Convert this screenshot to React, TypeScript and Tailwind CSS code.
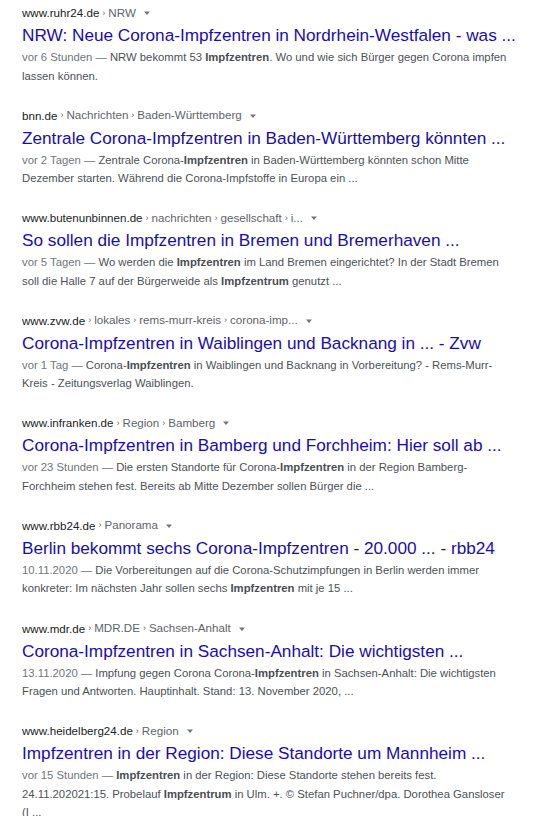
import React from "react";

type Part = string | { b: string };
type Entry = {
  domain: string;
  crumbs: string[];
  title: string;
  date: string;
  lines: Part[][];
};

const entries: Entry[] = [
  {
    domain: "www.ruhr24.de",
    crumbs: ["NRW"],
    title: "NRW: Neue Corona-Impfzentren in Nordrhein-Westfalen - was ...",
    date: "vor 6 Stunden",
    lines: [
      [" NRW bekommt 53 ", { b: "Impfzentren" }, ". Wo und wie sich Bürger gegen Corona impfen"],
      ["lassen können."],
    ],
  },
  {
    domain: "bnn.de",
    crumbs: ["Nachrichten", "Baden-Württemberg"],
    title: "Zentrale Corona-Impfzentren in Baden-Württemberg könnten ...",
    date: "vor 2 Tagen",
    lines: [
      [" Zentrale Corona-", { b: "Impfzentren" }, " in Baden-Württemberg könnten schon Mitte"],
      ["Dezember starten. Während die Corona-Impfstoffe in Europa ein ..."],
    ],
  },
  {
    domain: "www.butenunbinnen.de",
    crumbs: ["nachrichten", "gesellschaft", "i..."],
    title: "So sollen die Impfzentren in Bremen und Bremerhaven ...",
    date: "vor 5 Tagen",
    lines: [
      [" Wo werden die ", { b: "Impfzentren" }, " im Land Bremen eingerichtet? In der Stadt Bremen"],
      ["soll die Halle 7 auf der Bürgerweide als ", { b: "Impfzentrum" }, " genutzt ..."],
    ],
  },
  {
    domain: "www.zvw.de",
    crumbs: ["lokales", "rems-murr-kreis", "corona-imp..."],
    title: "Corona-Impfzentren in Waiblingen und Backnang in ... - Zvw",
    date: "vor 1 Tag",
    lines: [
      [" Corona-", { b: "Impfzentren" }, " in Waiblingen und Backnang in Vorbereitung? - Rems-Murr-"],
      ["Kreis - Zeitungsverlag Waiblingen."],
    ],
  },
  {
    domain: "www.infranken.de",
    crumbs: ["Region", "Bamberg"],
    title: "Corona-Impfzentren in Bamberg und Forchheim: Hier soll ab ...",
    date: "vor 23 Stunden",
    lines: [
      [" Die ersten Standorte für Corona-", { b: "Impfzentren" }, " in der Region Bamberg-"],
      ["Forchheim stehen fest. Bereits ab Mitte Dezember sollen Bürger die ..."],
    ],
  },
  {
    domain: "www.rbb24.de",
    crumbs: ["Panorama"],
    title: "Berlin bekommt sechs Corona-Impfzentren - 20.000 ... - rbb24",
    date: "10.11.2020",
    lines: [
      [" Die Vorbereitungen auf die Corona-Schutzimpfungen in Berlin werden immer"],
      ["konkreter: Im nächsten Jahr sollen sechs ", { b: "Impfzentren" }, " mit je 15 ..."],
    ],
  },
  {
    domain: "www.mdr.de",
    crumbs: ["MDR.DE", "Sachsen-Anhalt"],
    title: "Corona-Impfzentren in Sachsen-Anhalt: Die wichtigsten ...",
    date: "13.11.2020",
    lines: [
      [" Impfung gegen Corona Corona-", { b: "Impfzentren" }, " in Sachsen-Anhalt: Die wichtigsten"],
      ["Fragen und Antworten. Hauptinhalt. Stand: 13. November 2020, ..."],
    ],
  },
  {
    domain: "www.heidelberg24.de",
    crumbs: ["Region"],
    title: "Impfzentren in der Region: Diese Standorte um Mannheim ...",
    date: "vor 15 Stunden",
    lines: [
      [" ", { b: "Impfzentren" }, " in der Region: Diese Standorte stehen bereits fest."],
      ["24.11.202021:15. Probelauf ", { b: "Impfzentrum" }, " in Ulm. +. © Stefan Puchner/dpa. Dorothea Gansloser"],
      ["(I ..."],
    ],
  },
];

function renderParts(parts: Part[]) {
  return parts.map((p, i) =>
    typeof p === "string" ? (
      <span key={i}>{p}</span>
    ) : (
      <b key={i} className="font-bold text-[#4a4d52]">
        {p.b}
      </b>
    )
  );
}

function Result({ e }: { e: Entry }) {
  return (
    <div className="h-[102.6px]">
      <div className="flex items-center h-[20px] text-[11.6px] leading-[20px] whitespace-nowrap">
        <span className="text-[#202124]">{e.domain}</span>
        {e.crumbs.map((c, i) => (
          <span key={i} className="text-[#5f6368]">
            <span className="mx-[3px] text-[9px] relative -top-[1px]">›</span>
            {c}
          </span>
        ))}
        <svg width="8" height="8" viewBox="0 0 8 8" className="ml-[7px]">
          <path d="M1 2.5 L7 2.5 L4 6 Z" fill="#70757a" />
        </svg>
      </div>
      <div className="text-[17.2px] leading-[22px] text-[#1a0dab] whitespace-nowrap mt-[1px]">
        {e.title}
      </div>
      <div className="mt-[2px] text-[11.3px] leading-[18.5px] text-[#4d5156] whitespace-nowrap">
        {e.lines.map((l, i) => (
          <div key={i}>
            {i === 0 && <span className="text-[#70757a]">{e.date} —</span>}
            {renderParts(l)}
          </div>
        ))}
      </div>
    </div>
  );
}

export default function App() {
  return (
    <div
      className="w-[548px] h-[816px] bg-white overflow-hidden pl-[22px] pt-[3px]"
      style={{ fontFamily: '"Liberation Sans", Arial, sans-serif' }}
    >
      {entries.map((e, i) => (
        <Result key={i} e={e} />
      ))}
    </div>
  );
}
